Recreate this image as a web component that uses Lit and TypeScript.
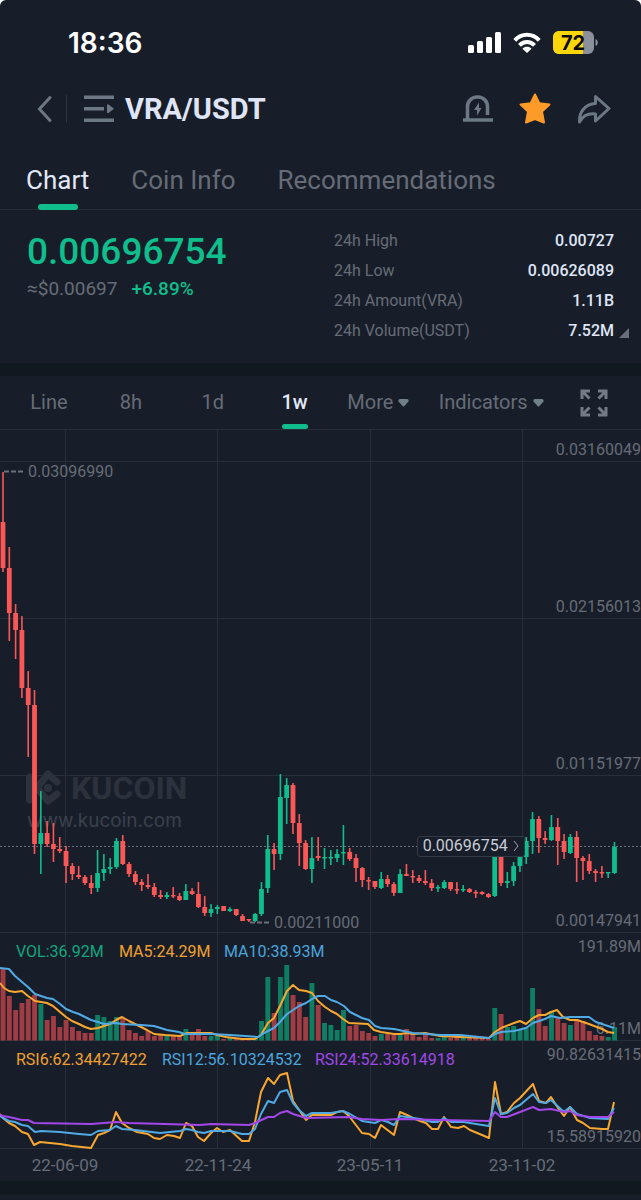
import { LitElement, html, svg, css } from "lit";
import { customElement, state } from "lit/decorators.js";
import { classMap } from "lit/directives/class-map.js";

type Candle = [dir: "u" | "d", high: number, open: number, close: number, low: number, volumeTop: number];

/* Weekly candles: direction, wick top, body top, body bottom, wick bottom, volume bar top. */
const CANDLES: Candle[] = [
  ["d", 472, 522, 568, 572, 969], ["d", 547, 568, 613, 641, 996], ["d", 604, 613, 630, 659, 1010],
  ["d", 616, 630, 688, 698, 1003], ["d", 671, 688, 705, 757, 999], ["d", 690, 705, 844, 854, 995],
  ["u", 791, 833, 844, 874, 1004], ["d", 821, 833, 844, 847, 1020], ["d", 823, 844, 849, 862, 1016],
  ["d", 837, 849, 851, 853, 1027], ["d", 846, 851, 866, 883, 1020], ["d", 863, 866, 874, 880, 1027],
  ["d", 866, 875, 877, 879, 1031], ["d", 875, 877, 883, 885, 1033], ["d", 875, 883, 888, 894, 1033],
  ["u", 850, 873, 888, 892, 1015], ["u", 854, 869, 873, 881, 1017], ["u", 858, 867, 869, 874, 1021],
  ["u", 838, 841, 867, 869, 1017], ["d", 835, 841, 864, 865, 1018], ["d", 862, 864, 874, 877, 1030],
  ["d", 871, 874, 882, 885, 1033], ["d", 879, 882, 885, 891, 1036], ["d", 874, 885, 887, 889, 1031],
  ["d", 883, 887, 895, 897, 1036], ["d", 890, 895, 897, 899, 1035], ["u", 892, 895, 897, 899, 1036],
  ["d", 887, 895, 896, 898, 1035], ["d", 893, 896, 900, 901, 1035], ["u", 884, 891, 900, 900, 1029],
  ["d", 888, 891, 894, 895, 1035], ["d", 882, 894, 907, 908, 1029], ["d", 896, 907, 913, 916, 1036],
  ["u", 904, 909, 913, 917, 1036], ["u", 905, 907, 909, 914, 1036], ["d", 906, 906, 911, 911, 1039],
  ["u", 907, 909, 911, 912, 1038], ["d", 909, 909, 915, 916, 1038], ["d", 914, 916, 921, 921, 1038],
  ["d", 919, 919, 920, 922, 1039], ["u", 913, 914, 921, 922, 1038], ["u", 882, 889, 914, 916, 1021],
  ["u", 835, 849, 888, 893, 977], ["d", 843, 849, 854, 870, 1013], ["u", 774, 797, 854, 860, 977],
  ["u", 778, 785, 798, 824, 965], ["d", 783, 785, 823, 834, 995], ["d", 814, 823, 843, 866, 1002],
  ["d", 840, 843, 869, 870, 1017], ["u", 837, 858, 869, 883, 983], ["d", 837, 856, 858, 861, 1005],
  ["u", 848, 857, 858, 869, 1023], ["u", 850, 857, 858, 865, 1025], ["u", 849, 854, 858, 862, 1030],
  ["u", 825, 852, 853, 865, 1010], ["d", 848, 852, 859, 861, 1026], ["d", 854, 858, 868, 882, 1025],
  ["d", 867, 868, 880, 887, 1031], ["d", 877, 880, 881, 890, 1033], ["d", 881, 881, 887, 889, 1036],
  ["u", 872, 879, 888, 889, 1034], ["d", 875, 879, 884, 887, 1034], ["d", 882, 884, 893, 896, 1035],
  ["u", 869, 874, 893, 893, 1034], ["d", 864, 874, 876, 876, 1029], ["d", 870, 876, 877, 883, 1033],
  ["d", 875, 878, 881, 883, 1037], ["d", 870, 881, 883, 885, 1035], ["d", 879, 883, 888, 891, 1038],
  ["u", 885, 887, 888, 892, 1038], ["u", 880, 882, 888, 889, 1036], ["d", 882, 882, 889, 891, 1038],
  ["d", 882, 889, 890, 894, 1036], ["u", 885, 889, 890, 892, 1036], ["d", 888, 889, 892, 893, 1038],
  ["d", 890, 892, 893, 898, 1037], ["d", 891, 892, 894, 895, 1038], ["d", 893, 894, 897, 898, 1039],
  ["u", 845, 850, 896, 897, 1008], ["d", 845, 850, 883, 886, 1014], ["u", 872, 881, 883, 888, 1027],
  ["u", 862, 866, 881, 886, 1026], ["u", 850, 857, 866, 872, 1030], ["u", 837, 841, 857, 864, 1027],
  ["u", 812, 819, 841, 854, 988], ["d", 816, 819, 838, 853, 1009], ["d", 831, 838, 840, 844, 1026],
  ["u", 815, 827, 840, 841, 1011], ["d", 818, 827, 841, 865, 1017], ["d", 834, 841, 852, 859, 1023],
  ["u", 834, 837, 853, 854, 1025], ["d", 831, 837, 858, 882, 1019], ["d", 856, 858, 861, 880, 1021],
  ["d", 854, 861, 871, 874, 1031], ["d", 869, 871, 873, 882, 1035], ["d", 866, 872, 873, 878, 1036],
  ["u", 872, 872, 873, 878, 1037], ["u", 842, 847, 873, 874, 1027],
];

const LINES: { cls: string; points: string }[] = [
  { cls: "orange", points: "0,983 4,988 9,991 15,992 22,991 28,996 35,1001 41,1002 47,1003 53,1006 60,1012 66,1017 72,1021 79,1024 85,1027 91,1029 98,1028 104,1026 110,1024 116,1020 122,1017 129,1021 135,1024 141,1027 147,1030 154,1034 165,1035 180,1036 187,1033 200,1033 211,1033 217,1035 226,1037 242,1039 255,1039 261,1035 268,1023 274,1018 280,1006 287,991 293,985 299,990 306,991 312,993 318,1001 325,1007 331,1011 337,1014 343,1019 349,1023 368,1024 374,1030 381,1032 394,1034 400,1034 407,1033 413,1034 425,1033 440,1036 460,1037 489,1038 495,1032 501,1028 514,1023 520,1021 526,1024 533,1018 539,1015 545,1015 551,1012 557,1010 563,1017 570,1020 577,1020 589,1024 602,1029 608,1032 614,1033" },
  { cls: "blue", points: "0,968 9,969 15,976 22,982 28,987 35,994 41,996 47,998 53,999 60,1004 66,1009 73,1012 79,1014 85,1017 91,1020 98,1022 104,1024 116,1023 122,1024 141,1025 154,1026 167,1030 179,1032 185,1034 211,1034 230,1035 258,1037 264,1033 268,1031 274,1028 280,1022 287,1014 293,1010 299,1006 306,1003 312,999 318,996 325,996 331,1000 337,1002 344,1006 350,1012 356,1015 362,1018 369,1020 375,1026 381,1028 394,1029 413,1033 440,1035 460,1035 489,1038 495,1034 501,1032 514,1031 526,1028 533,1023 545,1019 551,1016 560,1018 570,1017 589,1017 596,1022 608,1026 614,1028" },
  { cls: "orange", points: "0,1114 3,1118 9,1123 15,1126 22,1132 28,1134 34,1145 40,1142 60,1144 72,1146 91,1148 98,1135 104,1133 110,1130 116,1112 122,1123 129,1128 137,1132 148,1134 154,1138 160,1139 167,1135 174,1136 180,1138 186,1123 192,1126 198,1137 204,1141 211,1133 217,1128 223,1132 230,1130 242,1141 249,1141 255,1122 261,1092 268,1078 274,1084 280,1075 287,1073 293,1101 306,1120 312,1115 331,1115 337,1112 343,1111 349,1116 362,1133 369,1134 375,1138 381,1125 394,1135 400,1112 407,1115 413,1118 420,1121 426,1123 432,1129 438,1129 444,1117 451,1127 458,1128 464,1126 470,1130 482,1135 489,1138 495,1082 501,1114 507,1112 514,1103 520,1098 533,1084 539,1101 546,1103 551,1097 558,1108 564,1116 570,1107 577,1120 583,1123 590,1128 602,1129 608,1129 614,1102" },
  { cls: "blue", points: "0,1116 3,1118 9,1121 15,1122 22,1125 28,1126 35,1132 41,1131 60,1132 79,1134 91,1135 98,1131 110,1130 116,1126 122,1129 135,1130 160,1133 180,1131 186,1129 192,1130 198,1132 204,1133 211,1131 230,1131 242,1134 249,1134 255,1129 261,1114 268,1101 274,1103 280,1092 287,1090 293,1103 299,1110 306,1116 312,1113 331,1113 343,1111 350,1114 362,1121 375,1123 381,1120 388,1122 394,1125 400,1116 420,1119 432,1122 438,1122 444,1118 451,1122 464,1122 476,1124 489,1126 495,1098 501,1114 507,1113 514,1108 520,1105 533,1094 539,1102 546,1103 551,1100 564,1112 570,1107 577,1114 590,1118 608,1119 614,1108" },
  { cls: "purple", points: "0,1115 3,1116 9,1117 22,1120 28,1120 34,1123 91,1124 104,1123 116,1122 129,1123 200,1125 211,1124 249,1125 255,1123 268,1117 274,1117 280,1113 287,1111 293,1114 306,1118 349,1117 362,1119 381,1120 400,1119 440,1120 489,1121 495,1112 501,1117 507,1117 533,1107 539,1110 551,1109 564,1112 570,1111 577,1115 590,1117 608,1117 614,1112" },
];

const ROWS = [461, 618, 775, 932, 1040, 1148];
const COLS = [65, 217, 370, 522];
const PITCH = 6.304;

@customElement("kc-chart")
class KcChart extends LitElement {
  static styles = css`
    :host {
      display: block;
      position: relative;
      font-family: Roboto, sans-serif;
    }
    .plot {
      display: block;
      width: 100%;
      height: auto;
    }
    .grid { stroke: #292f39; stroke-width: 1; }
    .now { stroke: #6b717c; stroke-width: 1; stroke-dasharray: 2 2; }
    .mark { stroke: #6b717c; stroke-width: 2; stroke-dasharray: 5 2; }
    .u { fill: #0fbe8c; }
    .d { fill: #fb5757; }
    .vu { fill: #0e7d62; }
    .vd { fill: #a03c43; }
    .line { fill: none; stroke-width: 2; stroke-linejoin: round; }
    .line.orange { stroke: #f8a730; }
    .line.blue { stroke: #50aae6; }
    .line.purple { stroke: #a347ea; }
    text { font-size: 16px; fill: #666c77; }
    .date { font-size: 17px; text-anchor: middle; }
    .axis { text-anchor: end; }
    .t-green { fill: #12a67f; }
    .t-orange { fill: #f0a02f; }
    .t-blue { fill: #4aa5dd; }
    .t-purple { fill: #a048e8; }
    .brand { font-size: 32px; font-weight: 700; fill: #2c323d; }
    .site { font-family: Inter, sans-serif; font-size: 19px; fill: #3b414c; }
    .logo { fill: none; stroke: #2c323d; stroke-width: 7; stroke-linecap: round; stroke-linejoin: round; }
    .dot { fill: #2c323d; }
    .tag {
      position: absolute;
      left: 65%;
      top: 54%;
      display: flex;
      align-items: center;
      gap: 5px;
      height: 21px;
      box-sizing: border-box;
      padding: 0 5px;
      border: 1px solid #343a45;
      border-radius: 3px;
      background: #181e29;
      color: #c6cbd6;
      font: 16px/18px Roboto, sans-serif;
    }
    .tag svg { width: 6px; height: 12px; fill: none; stroke: #a0a6b1; stroke-width: 1; }
  `;

  render() {
    return html`
      <svg class="plot" viewBox="0 430 641 751" role="img" aria-label="VRA/USDT weekly candlestick chart">
        ${ROWS.map((y) => svg`<line class="grid" x1="0" x2="641" y1=${y + 0.5} y2=${y + 0.5} />`)}
        ${COLS.map((x) => svg`<line class="grid" x1=${x + 0.5} x2=${x + 0.5} y1="430" y2="1148" />`)}
        <path class="logo" d="M29.5 777V800M37 788L48 774L57 782M37 788L48 801L57 794" />
        <circle class="dot" cx="48" cy="788" r="4" />
        <text class="brand" x="71" y="799">KUCOIN</text>
        <text class="site" x="27" y="827">www.kucoin.com</text>
        <line class="now" x1="0" x2="641" y1="846.5" y2="846.5" />
        <text class="axis" x="641" y="455">0.03160049</text>
        <text class="axis" x="641" y="612">0.02156013</text>
        <text class="axis" x="641" y="769">0.01151977</text>
        <text class="axis" x="641" y="926">0.00147941</text>
        <text class="axis" x="641" y="952">191.89M</text>
        <text class="axis" x="641" y="1034">6.11M</text>
        <text class="axis" x="641" y="1060">90.82631415</text>
        <text class="axis" x="641" y="1142">15.58915920</text>
        ${CANDLES.map(([dir, high, top, bottom, low, vol], i) => {
          const x = 3 + i * PITCH;
          return svg`
            <rect class=${dir} x=${x - 0.8} y=${high} width="1.6" height=${low - high} rx="0.5" />
            <rect class=${dir} x=${x - 2.4} y=${top} width="4.8" height=${Math.max(bottom - top, 1.4)} rx="0.6" />
            <rect class=${"v" + dir} x=${x - 2.4} y=${vol} width="4.9" height=${1040.5 - vol} />`;
        })}
        ${LINES.map((l) => svg`<polyline class=${"line " + l.cls} points=${l.points} />`)}
        <line class="mark" x1="4" x2="23" y1="471.5" y2="471.5" />
        <text x="28" y="477">0.03096990</text>
        <line class="mark" x1="250" x2="269" y1="922.5" y2="922.5" />
        <text x="274" y="928">0.00211000</text>
        <text class="t-green" x="16" y="957">VOL:36.92M</text>
        <text class="t-orange" x="119" y="957">MA5:24.29M</text>
        <text class="t-blue" x="224" y="957">MA10:38.93M</text>
        <text class="t-orange" x="16" y="1065">RSI6:62.34427422</text>
        <text class="t-blue" x="162" y="1065">RSI12:56.10324532</text>
        <text class="t-purple" x="315" y="1065">RSI24:52.33614918</text>
        <text class="date" x="65" y="1171">22-06-09</text>
        <text class="date" x="218" y="1171">22-11-24</text>
        <text class="date" x="370" y="1171">23-05-11</text>
        <text class="date" x="522" y="1171">23-11-02</text>
      </svg>
      <button class="tag">0.00696754<svg viewBox="0 0 6 12" aria-hidden="true"><path d="M1 1L5 6L1 11" /></svg></button>
    `;
  }
}

@customElement("app-root")
class AppRoot extends LitElement {
  @state() private tab = "Chart";
  @state() private interval = "1w";

  static styles = css`
    :host {
      display: block;
      background: #fff;
      font-family: Roboto, sans-serif;
      color: #666c77;
    }
    .app {
      background: #181e29;
      border-radius: 6px 6px 0 0;
      overflow: hidden;
    }
    button {
      border: 0;
      padding: 0;
      background: none;
      color: inherit;
      font: inherit;
      cursor: pointer;
    }
    svg { display: block; }
    .status {
      display: flex;
      justify-content: space-between;
      align-items: center;
      padding: 26px 43px 0 68px;
      height: 34px;
      color: #fff;
    }
    .time { font: 600 28px/34px Inter, sans-serif; }
    .indicators { display: flex; align-items: center; gap: 12px; }
    .battery { font: 700 20px Inter, sans-serif; }
    .bar {
      display: flex;
      align-items: center;
      padding: 26px 30px 0 36px;
      height: 46px;
    }
    .divider { width: 1px; height: 28px; margin: 0 17px 0 13px; background: #2c323d; }
    h1 { margin: 0 auto 0 11px; font-size: 29px; line-height: 36px; font-weight: 700; color: #dfe5f7; }
    .actions { display: flex; align-items: center; gap: 26px; }
    .tabs {
      display: flex;
      gap: 42px;
      padding: 18px 26px 0;
      border-bottom: 1px solid #272d38;
      font-size: 26px;
    }
    .tab { position: relative; height: 59px; line-height: 60px; }
    .on { color: #e2e8f8; }
    .on::after {
      content: "";
      position: absolute;
      left: 50%;
      bottom: -1px;
      width: 40px;
      height: 6px;
      margin-left: -20px;
      border-radius: 3px;
      background: #0fbe8c;
    }
    .summary {
      display: grid;
      grid-template-columns: 307fr 280fr;
      padding: 16px 27px 17px;
      border-bottom: 13px solid #101820;
    }
    .price { font-size: 37px; line-height: 52px; font-weight: 500; color: #0fbe8c; }
    .sub { display: flex; gap: 14px; font-size: 19px; line-height: 22px; }
    .up { color: #0fbe8c; font-weight: 500; }
    .stats { position: relative; margin: 0; font-size: 16px; line-height: 30px; }
    .stat { display: flex; justify-content: space-between; }
    dd { margin: 0; color: #dfe5f7; font-weight: 500; }
    .corner { position: absolute; right: -15px; bottom: 8px; fill: #69707c; }
    .intervals {
      display: grid;
      grid-template-columns: repeat(4, 82fr) 86fr 140fr 66fr;
      padding: 0 14px 0 8px;
      border-bottom: 1px solid #292f39;
      font-size: 20px;
    }
    .interval {
      position: relative;
      display: flex;
      align-items: center;
      justify-content: center;
      gap: 5px;
      height: 53px;
      line-height: 55px;
    }
    .interval.on { font-weight: 500; }
    .interval.on::after { bottom: 0; width: 26px; height: 5px; margin-left: -13px; }
    .caret { fill: #6f8088; }
    .gap { height: 13px; background: #101820; }
    .next { height: 6px; }
  `;

  render() {
    return html`
      <main class="app">
        <div class="status">
          <span class="time">18:36</span>
          <div class="indicators">
            <svg width="33" height="22" viewBox="0 0 33 22" fill="#fff" aria-label="Signal">
              <rect x="0" y="13" width="6" height="8" rx="1.5" /><rect x="9" y="9" width="6" height="12" rx="1.5" />
              <rect x="18" y="5" width="6" height="16" rx="1.5" /><rect x="27" y="0" width="6" height="21" rx="1.5" />
            </svg>
            <svg width="28" height="22" viewBox="0 0 28 22" aria-label="Wi-Fi">
              <g fill="none" stroke="#fff" stroke-width="4"><path d="M1.8 8.4C8.5 1 19.5 1 26.2 8.4" /><path d="M6.5 13.4C10.5 9 17.5 9 21.5 13.4" /></g>
              <path d="M9.5 16.7C12 14.2 16 14.2 18.5 16.7L14 21Z" fill="#fff" />
            </svg>
            <svg width="45" height="24" viewBox="0 0 45 24" aria-label="Battery 72 percent">
              <rect width="41" height="23" rx="6" fill="#8b909b" />
              <path d="M6 0H30V23H6A6 6 0 0 1 0 17V6A6 6 0 0 1 6 0Z" fill="#fdd60a" />
              <path d="M42.5 8C45.5 9 45.5 14 42.5 15Z" fill="#8b909b" />
              <text class="battery" x="20" y="19" text-anchor="middle" fill="#0b0b0b">72</text>
            </svg>
          </div>
        </div>

        <header class="bar">
          <button aria-label="Back">
            <svg width="17" height="28" viewBox="0 0 17 28" fill="none" stroke="#6c7883" stroke-width="3" stroke-linecap="round"><path d="M14 2.5L3.5 14L14 25.5" /></svg>
          </button>
          <span class="divider"></span>
          <button aria-label="Markets">
            <svg width="30" height="28" viewBox="0 0 30 28" fill="#6c7883"><path d="M0 0.5H30V4H0ZM0 12H20V15.500H0ZM0 23.500H30V27H0ZM23 9.500L24.500 9.500L30 13.700L24.500 18H23Z" /></svg>
          </button>
          <h1>VRA/USDT</h1>
          <div class="actions">
            <button aria-label="Price alert">
              <svg width="30" height="30" viewBox="0 0 30 30">
                <path d="M0 26H30M4.5 26V13A9.500 9.500 0 0 1 14 3H15A9.500 9.500 0 0 1 24.500 13V21" fill="none" stroke="#6c7883" stroke-width="3.5" />
                <path d="M16 8.500L11 16H14V21.500L18.500 14H16Z" fill="#6c7883" />
              </svg>
            </button>
            <button aria-label="Favorite">
              <svg width="32" height="32" viewBox="0 0 32 32"><path d="M16 1.500L20.300 10.300L30.500 11.500L23 18.400L25 29.500L16 26L7 29.500L9 18.400L1.500 11.500L11.700 10.300Z" fill="#fd9b28" stroke="#fd9b28" stroke-width="2" stroke-linejoin="round" /></svg>
            </button>
            <button aria-label="Share">
              <svg width="34" height="30" viewBox="0 0 34 30" fill="none" stroke="#6c7883" stroke-width="3" stroke-linejoin="round"><path d="M18.500 2.500L32 14.500L18.500 27V20C11 19 6 21.500 2.500 28C2 18 8 10 18.500 9.500Z" /></svg>
            </button>
          </div>
        </header>

        <nav class="tabs">
          ${["Chart", "Coin Info", "Recommendations"].map(
            (t) => html`<button class=${classMap({ tab: true, on: this.tab === t })} @click=${() => (this.tab = t)}>${t}</button>`
          )}
        </nav>

        <section class="summary">
          <div>
            <div class="price">0.00696754</div>
            <div class="sub"><span>≈$0.00697</span><span class="up">+6.89%</span></div>
          </div>
          <dl class="stats">
            <div class="stat"><dt>24h High</dt><dd>0.00727</dd></div>
            <div class="stat"><dt>24h Low</dt><dd>0.00626089</dd></div>
            <div class="stat"><dt>24h Amount(VRA)</dt><dd>1.11B</dd></div>
            <div class="stat"><dt>24h Volume(USDT)</dt><dd>7.52M</dd></div>
            <svg class="corner" width="10" height="10" viewBox="0 0 10 10" aria-hidden="true"><path d="M10 0V10H0Z" /></svg>
          </dl>
        </section>

        <nav class="intervals">
          ${["Line", "8h", "1d", "1w"].map(
            (t) => html`<button class=${classMap({ interval: true, on: this.interval === t })} @click=${() => (this.interval = t)}>${t}</button>`
          )}
          ${["More", "Indicators"].map(
            (t) => html`<button class="interval">${t}<svg class="caret" width="11" height="8" viewBox="0 0 11 8" aria-hidden="true"><path d="M1.5 0H9.5Q11 0.5 10.5 2.5L6 7.5H5L0.5 2.5Q0 0.5 1.5 0Z" /></svg></button>`
          )}
          <button class="interval" aria-label="Full screen">
            <svg width="28" height="28" viewBox="0 0 28 28" fill="none" stroke="#727b86" stroke-width="3">
              <path d="M2 10V2H10M2 2L9.500 9.500M18 2H26V10M26 2L18.500 9.500M2 18V26H10M2 26L9.500 18.500M18 26H26V18M26 26L18.500 18.500" />
            </svg>
          </button>
        </nav>

        <kc-chart></kc-chart>
        <div class="gap"></div>
        <div class="next"></div>
      </main>
    `;
  }
}
